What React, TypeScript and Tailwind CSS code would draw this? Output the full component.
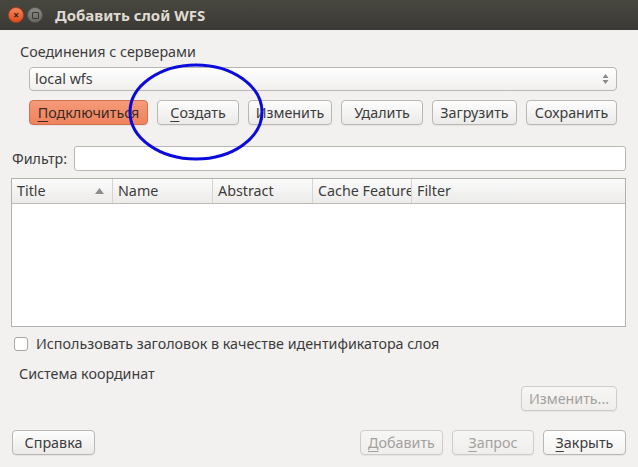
import type { ReactNode } from "react";

type BtnProps = {
  children: ReactNode;
  className?: string;
  disabled?: boolean;
  accent?: boolean;
};

function Btn({ children, className = "", disabled, accent }: BtnProps) {
  const look = accent
    ? "border-[#d1704f] bg-linear-to-b from-[#f59a78] to-[#ef825d] text-[#3a2a24]"
    : disabled
      ? "border-[#cfcdca] bg-linear-to-b from-[#f6f6f5] to-[#efeeed] text-[#a3a19e]"
      : "border-[#bab8b4] bg-linear-to-b from-[#fdfdfd] to-[#ebeae9] text-[#3c3c3c]";
  return (
    <button
      className={`flex h-[25px] items-center justify-center whitespace-nowrap rounded-[4px] border text-[14.3px] shadow-[0_1px_1px_rgba(0,0,0,0.06)] ${look} ${className}`}
    >
      {children}
    </button>
  );
}

function Mn({ c, rest }: { c: string; rest: string }) {
  return (
    <span>
      <span className="underline decoration-1 underline-offset-[3px]">{c}</span>
      {rest}
    </span>
  );
}

const cols = [
  { label: "Title", w: "w-[101px]", sort: true },
  { label: "Name", w: "w-[100px]" },
  { label: "Abstract", w: "w-[100px]" },
  { label: "Cache Feature", w: "w-[99px]" },
  { label: "Filter", w: "flex-1" },
];

export default function App() {
  return (
    <div className="relative h-[467px] w-[638px] overflow-hidden bg-[#f2f1f0] font-['Noto_Sans','DejaVu_Sans',sans-serif] text-[14.3px] text-[#3c3c3c]">
      {/* title bar */}
      <header className="flex h-[30px] items-center bg-linear-to-b from-[#48473f] to-[#3a3935] pl-[8px]">
        <div className="flex h-[16px] w-[16px] items-center justify-center rounded-full border border-[#b2401c] bg-linear-to-b from-[#f4845a] to-[#de4c1c] text-[10px] leading-none font-bold text-[#3b1a0e]">
          ×
        </div>
        <div className="ml-[3px] flex h-[16px] w-[16px] items-center justify-center rounded-full border border-[#55544f] bg-linear-to-b from-[#8a8984] to-[#6b6a66]">
          <div className="h-[7px] w-[7px] rounded-[1px] border border-[#3a3935]" />
        </div>
        <span className="ml-[12px] text-[15px] font-bold text-[#dfdbd2]">Добавить слой WFS</span>
      </header>

      {/* connections */}
      <div className="ml-[20px] mt-[13px] h-[18px] leading-[18px]">Соединения с серверами</div>
      <div className="mx-[21px] ml-[29px] mt-[6px] flex h-[24px] items-center justify-between rounded-[4px] border border-[#b9b7b3] bg-linear-to-b from-[#ffffff] to-[#f0efee] pl-[5px] pr-[7px]">
        <span>local wfs</span>
        <svg width="7" height="12" viewBox="0 0 7 12">
          <path d="M3.5 1 L6.5 5 L0.5 5 Z" fill="#8a8a8a" />
          <path d="M3.5 11 L6.5 7 L0.5 7 Z" fill="#8a8a8a" />
        </svg>
      </div>
      <div className="ml-[29px] mt-[9px] flex gap-[9px]">
        <Btn accent className="w-[119px]">
          <Mn c="П" rest="одключиться" />
        </Btn>
        <Btn className="w-[82px]">
          <Mn c="С" rest="оздать" />
        </Btn>
        <Btn className="w-[84px]">Изменить</Btn>
        <Btn className="w-[82px]">Удалить</Btn>
        <Btn className="w-[85px]">Загрузить</Btn>
        <Btn className="w-[91px]">Сохранить</Btn>
      </div>

      {/* filter */}
      <div className="ml-[12px] mr-[12px] mt-[21px] flex items-center">
        <span className="w-[62px]">Фильтр:</span>
        <div className="h-[25px] flex-1 rounded-[3px] border border-[#b9b7b3] bg-white" />
      </div>

      {/* table */}
      <div className="ml-[11px] mr-[12px] mt-[7px] flex h-[149px] flex-col border border-[#b3b1ad] bg-white">
        <div className="flex h-[25px] border-b border-[#bdbbb8] bg-linear-to-b from-[#fbfbfb] to-[#ecebea]">
          {cols.map((c) => (
            <div
              key={c.label}
              className={`flex items-center justify-between overflow-hidden whitespace-nowrap border-r border-[#d6d4d1] pl-[5px] pr-[8px] last:border-r-0 ${c.w}`}
            >
              <span>{c.label}</span>
              {c.sort && (
                <svg width="9" height="6" viewBox="0 0 9 6" className="shrink-0">
                  <path d="M4.5 0 L9 6 L0 6 Z" fill="#8c8c8c" />
                </svg>
              )}
            </div>
          ))}
        </div>
      </div>

      {/* checkbox */}
      <div className="ml-[14px] mt-[9px] flex h-[16px] items-center">
        <div className="h-[14px] w-[14px] rounded-[3px] border border-[#a9a7a3] bg-white" />
        <span className="ml-[8px]">Использовать заголовок в качестве идентификатора слоя</span>
      </div>
      <div className="ml-[19px] mt-[13px] h-[18px] leading-[18px]">Система координат</div>
      <div className="mr-[21px] mt-[3px] flex justify-end">
        <Btn disabled className="w-[96px]">
          Изменить...
        </Btn>
      </div>

      {/* bottom buttons */}
      <div className="ml-[12px] mr-[12px] mt-[19px] flex items-center">
        <Btn className="w-[83px]">Справка</Btn>
        <div className="flex-1" />
        <div className="flex gap-[9px]">
          <Btn disabled className="w-[83px]">
            <Mn c="Д" rest="обавить" />
          </Btn>
          <Btn disabled className="w-[82px]">
            <Mn c="З" rest="апрос" />
          </Btn>
          <Btn className="w-[83px] from-[#ffffff] to-[#f3f2f1] text-[#2f2f2f]">
            <Mn c="З" rest="акрыть" />
          </Btn>
        </div>
      </div>

      {/* hand-drawn annotation */}
      <svg className="pointer-events-none absolute left-[127px] top-[62px]" width="138" height="100" viewBox="0 0 138 100">
        <ellipse cx="69" cy="50" rx="66" ry="47" fill="none" stroke="#0a0adc" strokeWidth="3" />
      </svg>
    </div>
  );
}
